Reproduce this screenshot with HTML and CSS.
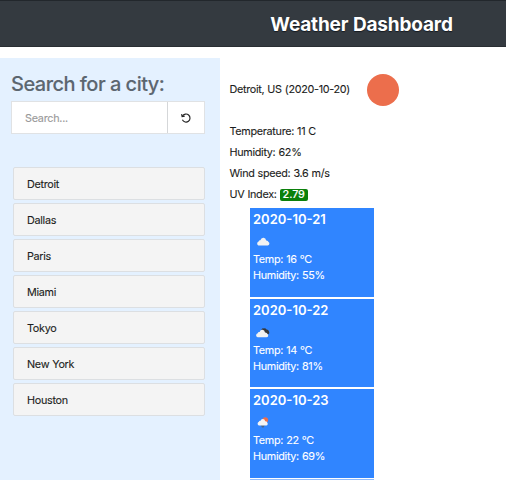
FILE: index.html
```html
<!DOCTYPE html>
<html lang="en">
<head>
<meta charset="utf-8">
<title>Weather Dashboard</title>
<link rel="stylesheet" href="styles.css">
</head>
<body>
<header class="header"><h1>Weather Dashboard</h1></header>
<div class="layout">
  <aside class="sidebar">
    <h2>Search for a city:</h2>
    <form class="search">
      <input type="text" placeholder="Search..." aria-label="City">
      <button type="button" aria-label="Reset">
        <svg width="10" height="10" viewBox="0 0 10 10" fill="none" stroke="#222" stroke-width="1.15"><path d="M1.5 3.1A4 4 0 1 1 1.4 6.8"/><path d="M.6 1.1 1.1 3.6 3.7 3.1"/></svg>
      </button>
    </form>
    <ul class="cities">
      <li>Detroit</li><li>Dallas</li><li>Paris</li><li>Miami</li><li>Tokyo</li><li>New York</li><li>Houston</li>
    </ul>
  </aside>
  <main class="weather">
    <div class="current"><span>Detroit, US (2020-10-20)</span><span class="sun"></span></div>
    <p>Temperature: 11 C</p>
    <p>Humidity: 62%</p>
    <p>Wind speed: 3.6 m/s</p>
    <p>UV Index: <span class="uv">2.79</span></p>
    <div class="forecast">
      <section class="day">
        <h3>2020-10-21</h3>
        <svg class="icon" width="20" height="20" viewBox="0 0 20 20"><path fill="#f2f2f2" d="M5.4 14.5A2.1 2.1 0 0 1 5.6 10.6Q6 9.2 7.3 9.3Q8.2 6.6 10.5 6.8Q12.7 7 13.2 9.4Q15 9.2 15.5 11A1.9 1.9 0 0 1 14.7 14.5Z"/></svg>
        <div>Temp: 16 °C</div><div>Humidity: 55%</div>
      </section>
      <section class="day">
        <h3>2020-10-22</h3>
        <svg class="icon" width="20" height="20" viewBox="0 0 20 20"><path fill="#35383d" d="M8.4 7.4Q9.4 6 10.8 6.5Q12.4 5.8 13.5 7.6Q15.5 7.5 16 9.5Q16.9 11 15.5 12.2L12 11Z"/><path fill="#f2f2f2" d="M4.6 15.2A2 2 0 0 1 4.7 11.3Q5 9.8 6.6 10Q7.3 7.7 9.5 7.8Q11.6 8.1 12 10.4Q14 10.2 14.4 11.9A1.8 1.8 0 0 1 13.5 15.2Z"/></svg>
        <div>Temp: 14 °C</div><div>Humidity: 81%</div>
      </section>
      <section class="day">
        <h3>2020-10-23</h3>
        <svg class="icon" width="20" height="20" viewBox="0 0 20 20"><circle cx="12.3" cy="8" r="2.8" fill="#ec6e4c"/><path fill="#48668f" d="m7.5 12.5 4.5-.2-1.3 3.2H9Z"/><path fill="#f5f5f5" d="M5.8 13.5A2 2 0 0 1 5.9 9.8Q6.2 8.7 7.3 8.9Q8.1 6.9 9.9 7Q11.8 7.1 12.2 9.3Q13.9 9.2 14.3 10.7A1.7 1.7 0 0 1 13.3 13.5Z"/></svg>
        <div>Temp: 22 °C</div><div>Humidity: 69%</div>
      </section>
    </div>
    <div class="more"></div>
  </main>
</div>
</body>
</html>
```
FILE: styles.css
```css
* { box-sizing: border-box; }
body { margin: 0; background: #fff; color: #1b1d20; font: 10.8px/21px Inter, "Liberation Sans", sans-serif; letter-spacing: -.3px; word-spacing: .3px; -webkit-text-stroke: .1px currentColor; }
h1, h2, h3, p, ul { margin: 0; padding: 0; }
.header { height: 47px; padding-left: 217px; background: #343a40; border-top: 1px solid #22272c; border-bottom: 1px solid #292e33; }
h1 { color: #fff; font-size: 19px; line-height: 47px; font-weight: 700; text-align: center; letter-spacing: -.17px; text-shadow: 0 1px 1px #151a20; -webkit-text-stroke: 0; }
.layout { display: flex; align-items: flex-start; padding-top: 11px; }
.sidebar { width: 220px; height: 422px; padding: 11px 15px 0 11px; background: #e4f1ff; }
h2 { height: 32px; color: #5c666f; font-size: 20px; line-height: 30px; font-weight: 500; letter-spacing: -.52px; word-spacing: 0; white-space: nowrap; }
.search { display: flex; width: 194px; height: 33px; margin-bottom: 33px; border: 1px solid #e0e2e4; background: #fff; }
.search input { width: 156px; min-width: 0; padding: 1px 13px 0; border: 0; border-right: 1px solid #d5d7d9; background: transparent; color: #333; font: inherit; letter-spacing: -.25px; }
.search input::placeholder { color: #999; opacity: 1; }
.search button { display: flex; flex: 1; align-items: center; justify-content: center; padding: 0; border: 0; background: transparent; }
.cities { display: grid; gap: 3px; width: 192px; margin-left: 2px; list-style: none; }
.cities li { height: 33px; padding-left: 13px; border: 1px solid #dcdfe2; border-radius: 2px; background: #f4f4f4; line-height: 33px; }
.weather { flex: 1; height: 422px; padding: 16px 0 0 9.5px; }
.current { display: flex; gap: 17px; height: 47px; line-height: 31px; white-space: nowrap; }
.current span:first-child { width: 120.5px; }
.sun { width: 32px; height: 32px; border-radius: 50%; background: #ec6e4c; }
.uv { display: inline-block; height: 12px; padding: 0 3px; border-radius: 2px; background: #0b800b; color: #fff; font-weight: 500; line-height: 12px; letter-spacing: -.1px; }
.forecast { display: grid; gap: 2px; width: 124px; margin: 3px 0 0 20.5px; }
.day { height: 88.5px; padding: 2px 3px; background: #3085ff; color: #fff; line-height: 16px; }
h3 { height: 18px; font-size: 13px; line-height: 18px; font-weight: 600; letter-spacing: 0; -webkit-text-stroke: 0; }
.icon { display: block; height: 20px; margin: 3px 0 1px; }
.more { width: 124px; height: 1px; margin: 1px 0 0 20.5px; background: #8fbcff; }
```
